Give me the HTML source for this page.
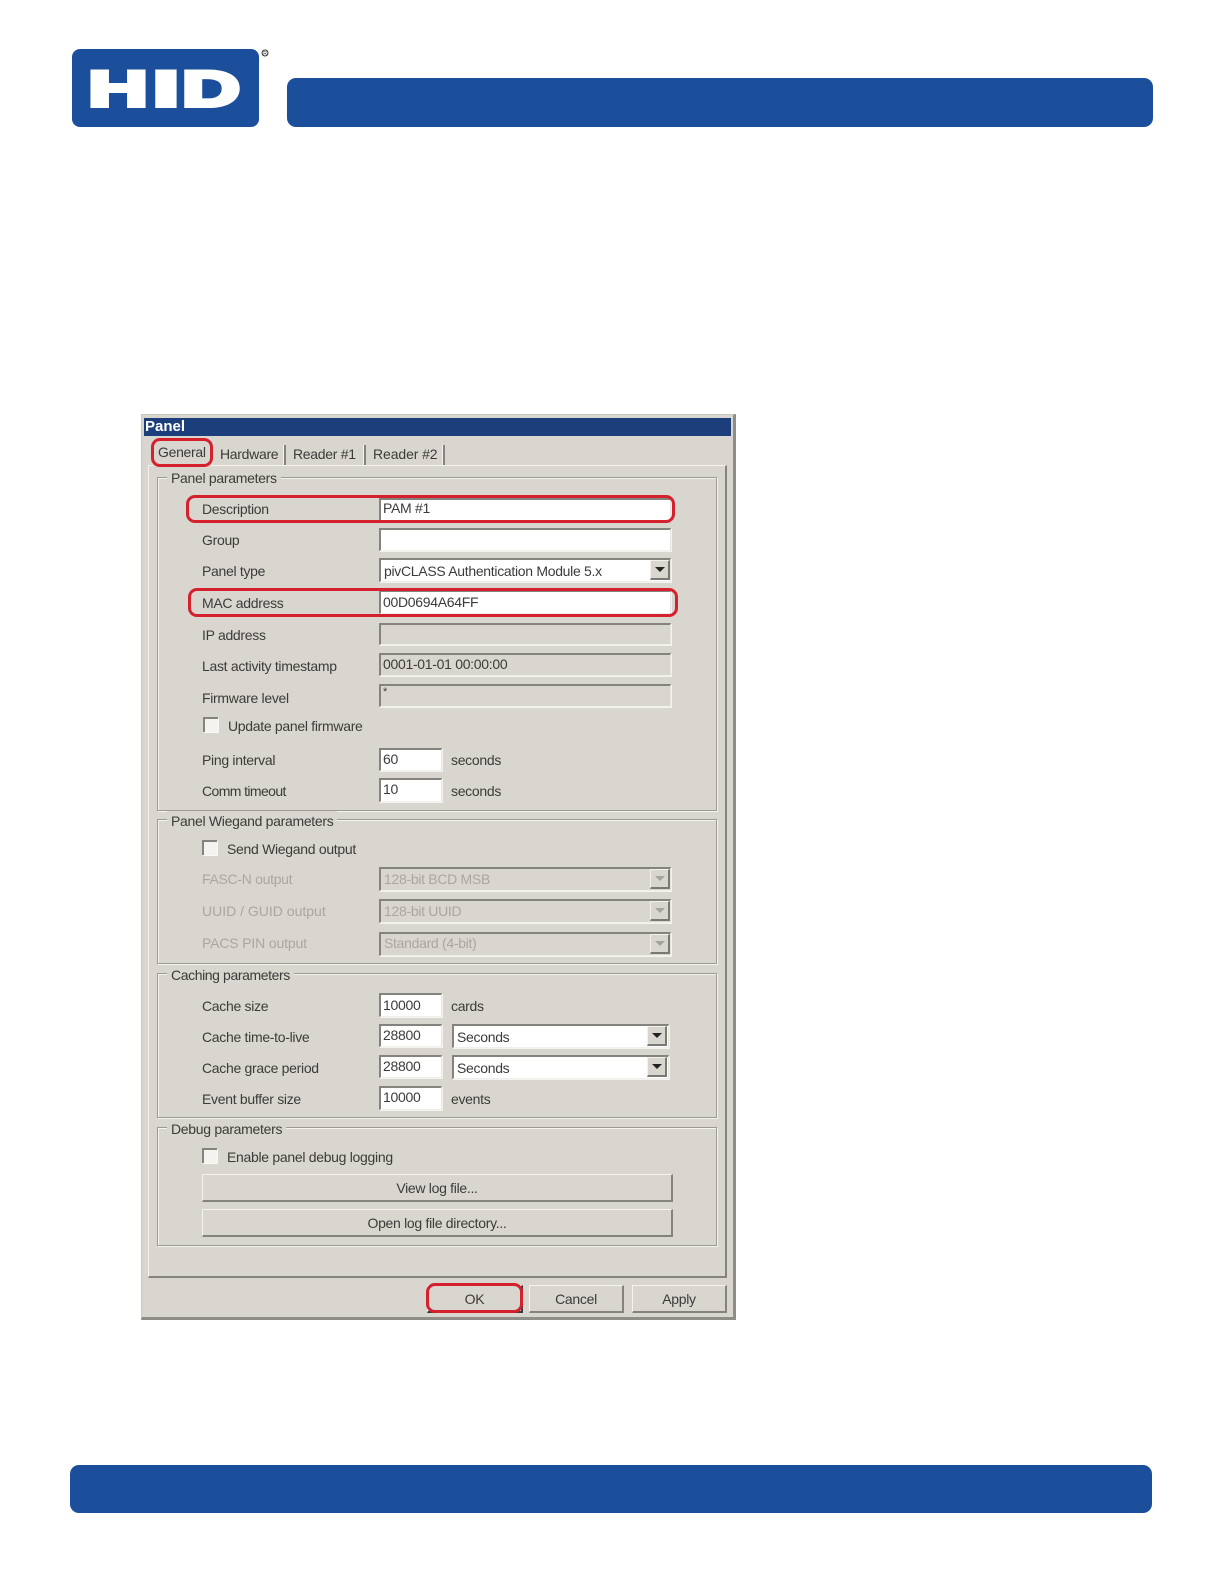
<!DOCTYPE html>
<html><head><meta charset="utf-8"><title>Panel</title>
<style>
html,body{margin:0;padding:0;background:#fff}
body{width:1224px;height:1584px;position:relative;overflow:hidden;font-family:"Liberation Sans",sans-serif}
div{position:absolute;box-sizing:border-box}
.bar{background:#1b4f9b;border-radius:9px}
#dlg{left:0;top:0;width:1224px;height:1584px;filter:blur(.35px)}
.t{font-size:14px;letter-spacing:-.3px;line-height:20px;height:20px;white-space:nowrap;color:#3b3b39}
.d{color:#a9a7a0}
.gb{border:1px solid #9c9a94;box-shadow:1px 1px 0 #f4f3ef,inset 1px 1px 0 #f4f3ef;left:157px;width:560px}
.lg{background:#d9d6cf;padding:0 4px;left:167px}
.in{background:#fff;border-top:2px solid #85837d;border-left:2px solid #85837d;border-right:1px solid #e6e4df;border-bottom:1px solid #f0efeb;box-shadow:1px 1px 0 #f4f3ef}
.dis{background:#d9d6cf}
.ar{background:#d9d6cf;border-top:1px solid #f2f1ed;border-left:1px solid #f2f1ed;border-right:2px solid #7a7873;border-bottom:2px solid #7a7873;width:20px;height:20px}
.ar:after{content:"";position:absolute;left:4px;top:6px;border-left:5px solid transparent;border-right:5px solid transparent;border-top:5px solid #222}
.ar.g:after{border-top-color:#a5a39d}
.btn{background:#d9d6cf;border-top:1px solid #f4f3ef;border-left:1px solid #f4f3ef;border-right:2px solid #85837d;border-bottom:2px solid #85837d;text-align:center;font-size:14px;letter-spacing:-.3px;color:#3b3b39;line-height:26px;white-space:nowrap}
.cb{width:15px;height:15px;background:#f4f3ef;border-top:2px solid #85837d;border-left:2px solid #85837d;box-shadow:1px 1px 0 #f8f8f6}
.red{border:3px solid #d5202e;border-radius:9px}
.sep{width:2px;background:#85837d;top:445px;height:20px;box-shadow:-1px 0 0 #f4f3ef}
</style></head><body>

<div class="bar" style="left:72px;top:49px;width:187px;height:78px;border-radius:8px"></div>
<svg style="position:absolute;left:72px;top:49px" width="187" height="78" font-family="Liberation Sans" font-weight="bold" font-size="50" fill="#fff" stroke="#fff" stroke-width="4" stroke-linejoin="miter">
<text transform="translate(16.3,57) scale(1.65,1)">H</text>
<text transform="translate(80.7,57) scale(1.9,1)">I</text>
<text transform="translate(110.1,57) scale(1.6,1)">D</text>
</svg>
<svg style="position:absolute;left:259px;top:47px" width="12" height="12"><circle cx="6" cy="6" r="3" fill="none" stroke="#333" stroke-width="1"/><text x="6" y="8" text-anchor="middle" font-size="5" font-family="Liberation Sans" fill="#333">R</text></svg>
<div class="bar" style="left:287px;top:78px;width:866px;height:49px"></div>
<div class="bar" style="left:70px;top:1465px;width:1082px;height:48px"></div>

<div id="dlg">
<div style="left:141px;top:414px;width:595px;height:906px;background:#d9d6cf;border:1px solid #c9c7c1;border-right:3px solid #8f8d88;border-bottom:3px solid #8f8d88"></div>
<div style="left:144px;top:418px;width:587px;height:18px;background:#1c3f7c"></div>
<div class="t" style="left:145px;top:417px;color:#fff;font-weight:bold;font-size:15px;letter-spacing:0">Panel</div>

<div style="left:148px;top:465px;width:579px;height:813px;border-top:1px solid #f4f3ef;border-left:1px solid #f4f3ef;border-right:2px solid #85837d;border-bottom:2px solid #85837d"></div>
<div style="left:153px;top:440px;width:58px;height:27px;background:#d9d6cf"></div>
<div class="t" style="left:158px;top:442px">General</div>
<div class="t" style="left:220px;top:444px">Hardware</div>
<div class="t" style="left:293px;top:444px">Reader #1</div>
<div class="t" style="left:373px;top:444px;letter-spacing:-.1px">Reader #2</div>
<div class="sep" style="left:284px"></div>
<div class="sep" style="left:364px"></div>
<div class="sep" style="left:443px"></div>

<div class="gb" style="top:477px;height:334px"></div>
<div class="t lg" style="top:468px">Panel parameters</div>
<div class="gb" style="top:819px;height:145px"></div>
<div class="t lg" style="top:811px">Panel Wiegand parameters</div>
<div class="gb" style="top:973px;height:145px"></div>
<div class="t lg" style="top:965px;letter-spacing:-.4px">Caching parameters</div>
<div class="gb" style="top:1127px;height:119px"></div>
<div class="t lg" style="top:1119px">Debug parameters</div>

<div class="t" style="left:202px;top:499px">Description</div>
<div class="t" style="left:202px;top:530px">Group</div>
<div class="t" style="left:202px;top:561px">Panel type</div>
<div class="t" style="left:202px;top:593px">MAC address</div>
<div class="t" style="left:202px;top:625px">IP address</div>
<div class="t" style="left:202px;top:656px">Last activity timestamp</div>
<div class="t" style="left:202px;top:688px">Firmware level</div>
<div class="cb" style="left:203px;top:717px"></div>
<div class="t" style="left:228px;top:716px">Update panel firmware</div>
<div class="t" style="left:202px;top:750px">Ping interval</div>
<div class="t" style="left:202px;top:781px;letter-spacing:-.6px">Comm timeout</div>

<div class="in" style="left:379px;top:498px;width:292px;height:23px"></div>
<div class="t" style="left:383px;top:498px">PAM #1</div>
<div class="in" style="left:379px;top:528px;width:292px;height:23px"></div>
<div class="in" style="left:379px;top:558px;width:292px;height:24px"></div>
<div class="t" style="left:384px;top:561px">pivCLASS Authentication Module 5.x</div>
<div class="ar" style="left:650px;top:560px"></div>
<div class="in" style="left:379px;top:590px;width:292px;height:24px"></div>
<div class="t" style="left:383px;top:592px">00D0694A64FF</div>
<div class="in dis" style="left:379px;top:623px;width:292px;height:22px"></div>
<div class="in dis" style="left:379px;top:653px;width:292px;height:23px"></div>
<div class="t" style="left:383px;top:654px">0001-01-01 00:00:00</div>
<div class="in dis" style="left:379px;top:684px;width:292px;height:23px"></div>
<div class="t" style="left:383px;top:682px;font-size:11px">*</div>
<div class="in" style="left:379px;top:748px;width:63px;height:23px"></div>
<div class="t" style="left:383px;top:749px">60</div>
<div class="t" style="left:451px;top:750px">seconds</div>
<div class="in" style="left:379px;top:778px;width:63px;height:24px"></div>
<div class="t" style="left:383px;top:779px">10</div>
<div class="t" style="left:451px;top:781px">seconds</div>

<div class="cb" style="left:202px;top:840px"></div>
<div class="t" style="left:227px;top:839px">Send Wiegand output</div>
<div class="t d" style="left:202px;top:869px">FASC-N output</div>
<div class="t d" style="left:202px;top:901px;letter-spacing:0">UUID / GUID output</div>
<div class="t d" style="left:202px;top:933px;letter-spacing:-.15px">PACS PIN output</div>
<div class="in dis" style="left:379px;top:867px;width:292px;height:24px"></div>
<div class="t d" style="left:384px;top:869px">128-bit BCD MSB</div>
<div class="ar g" style="left:650px;top:869px"></div>
<div class="in dis" style="left:379px;top:899px;width:292px;height:24px"></div>
<div class="t d" style="left:384px;top:901px">128-bit UUID</div>
<div class="ar g" style="left:650px;top:901px"></div>
<div class="in dis" style="left:379px;top:932px;width:292px;height:24px"></div>
<div class="t d" style="left:384px;top:933px">Standard (4-bit)</div>
<div class="ar g" style="left:650px;top:934px"></div>

<div class="t" style="left:202px;top:996px">Cache size</div>
<div class="t" style="left:202px;top:1027px">Cache time-to-live</div>
<div class="t" style="left:202px;top:1058px">Cache grace period</div>
<div class="t" style="left:202px;top:1089px">Event buffer size</div>
<div class="in" style="left:379px;top:993px;width:63px;height:24px"></div>
<div class="t" style="left:383px;top:995px">10000</div>
<div class="t" style="left:451px;top:996px">cards</div>
<div class="in" style="left:379px;top:1024px;width:63px;height:23px"></div>
<div class="t" style="left:383px;top:1025px">28800</div>
<div class="in" style="left:452px;top:1024px;width:217px;height:24px"></div>
<div class="t" style="left:457px;top:1027px">Seconds</div>
<div class="ar" style="left:647px;top:1026px"></div>
<div class="in" style="left:379px;top:1055px;width:63px;height:23px"></div>
<div class="t" style="left:383px;top:1056px">28800</div>
<div class="in" style="left:452px;top:1055px;width:217px;height:24px"></div>
<div class="t" style="left:457px;top:1058px">Seconds</div>
<div class="ar" style="left:647px;top:1057px"></div>
<div class="in" style="left:379px;top:1086px;width:63px;height:24px"></div>
<div class="t" style="left:383px;top:1087px">10000</div>
<div class="t" style="left:451px;top:1089px">events</div>

<div class="cb" style="left:202px;top:1148px"></div>
<div class="t" style="left:227px;top:1147px">Enable panel debug logging</div>
<div class="btn" style="left:202px;top:1174px;width:471px;height:28px">View log file...</div>
<div class="btn" style="left:202px;top:1209px;width:471px;height:28px">Open log file directory...</div>

<div class="btn" style="left:427px;top:1285px;width:96px;height:28px;border-right-color:#3c3a37;border-bottom-color:#3c3a37">OK</div>
<div class="btn" style="left:529px;top:1285px;width:95px;height:28px">Cancel</div>
<div class="btn" style="left:632px;top:1285px;width:95px;height:28px">Apply</div>

<div class="red" style="left:151px;top:438px;width:62px;height:29px"></div>
<div class="red" style="left:186px;top:495px;width:489px;height:28px"></div>
<div class="red" style="left:188px;top:588px;width:490px;height:29px"></div>
<div class="red" style="left:426px;top:1283px;width:97px;height:30px"></div>
</div>
</body></html>
